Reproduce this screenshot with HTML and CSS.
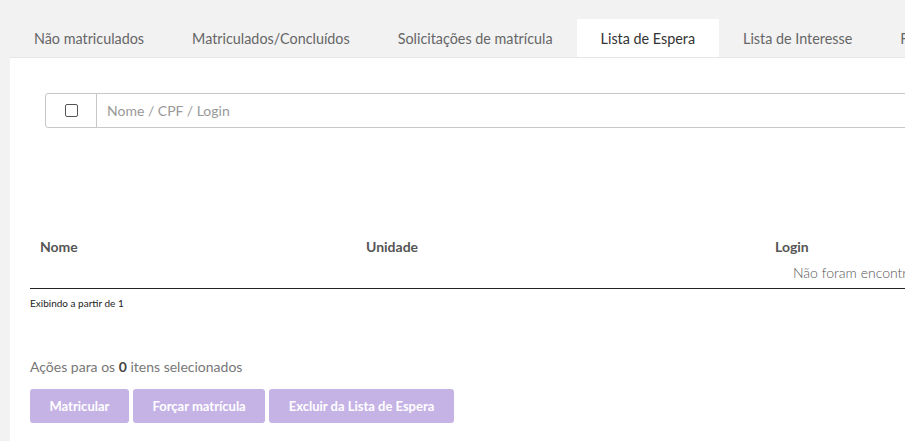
FILE: index.html
```html
<!DOCTYPE html>
<html lang="pt-BR">
<head>
<meta charset="utf-8">
<title>Lista de Espera</title>
<link rel="stylesheet" href="styles.css">
</head>
<body>
<div class="page">
  <nav class="tabs">
    <a class="tab">Não matriculados</a>
    <a class="tab">Matriculados/Concluídos</a>
    <a class="tab">Solicitações de matrícula</a>
    <a class="tab active">Lista de Espera</a>
    <a class="tab">Lista de Interesse</a>
    <a class="tab">Frequência</a>
  </nav>
  <section class="panel">
    <div class="search">
      <span class="addon"><span class="check"></span></span>
      <span class="input">Nome / CPF / Login</span>
    </div>
    <table class="grid">
      <thead>
        <tr>
          <th class="c1">Nome</th>
          <th class="c2">Unidade</th>
          <th class="c3">Login</th>
        </tr>
      </thead>
      <tbody>
        <tr><td class="empty" colspan="3">Não foram encontrados registros.</td></tr>
      </tbody>
    </table>
    <p class="paging">Exibindo a partir de 1</p>
    <p class="actions-label">Ações para os <b>0</b> itens selecionados</p>
    <div class="buttons">
      <button class="btn">Matricular</button>
      <button class="btn">Forçar matrícula</button>
      <button class="btn">Excluir da Lista de Espera</button>
    </div>
  </section>
</div>
</body>
</html>
```
FILE: styles.css
```css
html, body {
  margin: 0;
  padding: 0;
  overflow: hidden;
  background: #f2f2f2;
}
body {
  font-family: Lato, "Open Sans", sans-serif;
  color: #555;
  height: 441px;
}
.page {
  width: 1800px;
  padding-left: 10px;
  padding-top: 19px;
}
.tabs {
  display: flex;
  height: 38px;
}
.tab {
  display: flex;
  align-items: center;
  padding: 0 24px;
  font-size: 14.35px;
  color: #666;
  white-space: nowrap;
}
.tab.active {
  background: #fff;
  color: #333;
}
.panel {
  background: #fff;
  border-top: 1px solid #e6e6e6;
  padding: 35px 0 20px 20px;
  height: 330px;
}
.search {
  display: flex;
  margin-left: 15px;
  height: 33px;
  border: 1px solid #c8c8c8;
  border-radius: 3px;
  width: 1500px;
}
.addon {
  width: 50px;
  border-right: 1px solid #c8c8c8;
  display: flex;
  align-items: center;
  justify-content: center;
}
.check {
  width: 11px;
  height: 11px;
  border: 1px solid #555;
  border-radius: 2px;
}
.input {
  display: flex;
  align-items: center;
  padding-left: 10px;
  font-size: 14px;
  color: #999;
}
.grid {
  border-collapse: collapse;
  margin-top: 104px;
  width: 1700px;
  table-layout: fixed;
  border-bottom: 1px solid #222;
}
.grid th {
  text-align: left;
  font-size: 14px;
  font-weight: 700;
  color: #555;
  padding: 6px 10px 6px;
  height: 14px;
}
.c1 { width: 306px; }
.c2 { width: 389px; }
.grid td {
  font-size: 14px;
  color: #555;
  font-weight: 300;
  padding: 3px 0 7px 763px;
  text-align: left;
}
.paging {
  margin: 8px 0 0;
  font-size: 10px;
  color: #222;
}
.actions-label {
  margin: 49px 0 0;
  font-size: 14px;
  color: #777;
}
.actions-label b {
  color: #444;
}
.buttons {
  display: flex;
  gap: 4px;
  margin-top: 14px;
}
.btn {
  background: #c5b3e6;
  border: 0;
  border-radius: 3px;
  color: #fff;
  font-family: inherit;
  font-size: 13px;
  font-weight: 700;
  height: 34px;
  padding: 0 19.5px;
}
```
